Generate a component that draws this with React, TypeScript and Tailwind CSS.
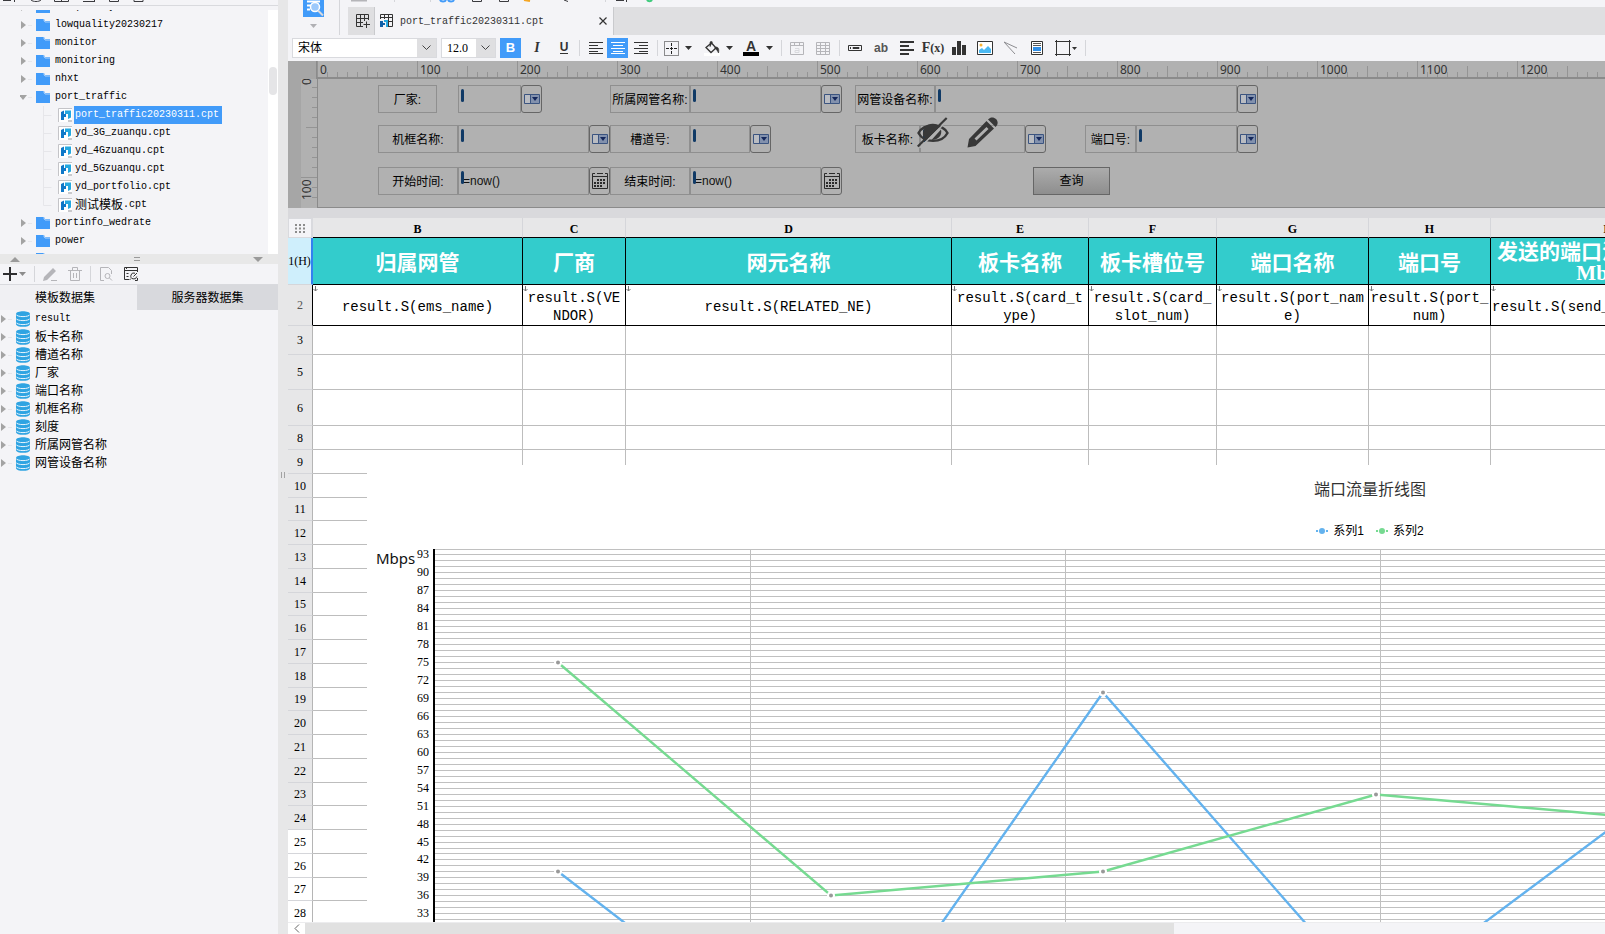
import { useState } from 'react';
import type { ReactNode } from 'react';

const MONO = "font-['Liberation_Mono','Noto_Sans_CJK_SC',monospace]";
const SERIF = "font-['Liberation_Serif','Noto_Sans_CJK_SC',serif]";

const folders = ['lowquality', 'lowquality20230217', 'monitor', 'monitoring', 'nhxt', 'port_traffic'];
const files = [
  'port_traffic20230311.cpt',
  'yd_3G_zuanqu.cpt',
  'yd_4Gzuanqu.cpt',
  'yd_5Gzuanqu.cpt',
  'yd_portfolio.cpt',
  '测试模板.cpt'
];
const moreFolders = ['portinfo_wedrate', 'power', 'report'];
const datasets = ['result', '板卡名称', '槽道名称', '厂家', '端口名称', '机框名称', '刻度', '所属网管名称', '网管设备名称'];

const columns = [
  { letter: 'B', width: 210, title: ['归属网管'], cell: ['result.S(ems_name)'] },
  { letter: 'C', width: 103, title: ['厂商'], cell: ['result.S(VE', 'NDOR)'] },
  { letter: 'D', width: 326, title: ['网元名称'], cell: ['result.S(RELATED_NE)'] },
  { letter: 'E', width: 137, title: ['板卡名称'], cell: ['result.S(card_t', 'ype)'] },
  { letter: 'F', width: 128, title: ['板卡槽位号'], cell: ['result.S(card_', 'slot_num)'] },
  { letter: 'G', width: 152, title: ['端口名称'], cell: ['result.S(port_nam', 'e)'] },
  { letter: 'H', width: 122, title: ['端口号'], cell: ['result.S(port_', 'num)'] },
  { letter: 'I', width: 230, title: ['发送的端口流量（单位:', 'Mbps)'], cell: ['result.S(send_traffic_mbps)'] }
];

const emptyRows = [
  { n: 3, h: 29 },
  { n: 5, h: 35 },
  { n: 6, h: 36 },
  { n: 8, h: 24 },
  { n: 9, h: 24 },
  ...Array.from({ length: 19 }, (_, i) => ({ n: i + 10, h: (i + 10) % 4 === 3 ? 23 : 24 }))
];

/* CJK glyphs are 12px and latin ones 10px, so that two latin characters take one CJK cell */
const TreeText = ({ text, className = '' }: { text: string; className?: string }) => {
  const parts = text.match(/[\x00-\x7f]+|[^\x00-\x7f]+/g) || [];
  return (
    <span className={`flex h-[18px] items-center ${className}`}>
      {parts.map((part) => (
        <span key={part} className={part.charCodeAt(0) > 127 ? 'pt-px text-xs leading-[18px]' : 'text-[10px] leading-[18px]'}>
          {part}
        </span>
      ))}
    </span>
  );
};

const Caret = ({ className = '' }: { className?: string }) => (
  <svg className={`shrink-0 ${className}`} width="7" height="4" viewBox="0 0 7 4">
    <path d="M0 0h7L3.5 4z" fill="currentColor" />
  </svg>
);

const Arrow = ({ open = false }: { open?: boolean }) => (
  <svg width="16" height="18" viewBox="0 0 16 18" className="shrink-0">
    {open ? <path d="M-1 7h8l-4 5z" fill="#a3a3a3" /> : <path d="M1 5l5 4-5 4z" fill="#a3a3a3" />}
    <path d="M8 9.500h4" stroke="#e6e6ea" />
  </svg>
);

const FolderIcon = () => (
  <svg width="14" height="12" viewBox="0 0 14 12" className="shrink-0">
    <path d="M0 0h8l1 2h5v10H0z" fill="#419bf9" />
    <path d="M7.500 .5l1.500 2.500h5" fill="none" stroke="#cfe4fd" strokeWidth=".8" />
  </svg>
);

const CptIcon = () => (
  <svg width="14" height="14" viewBox="0 0 14 14" className="shrink-0">
    <path d="M1 1h13v13H1z" fill="#fff" />
    <path d="M.5 14V.5H14" fill="none" stroke="#c4c4c8" />
    <path d="M10 12h4v2h-4z" fill="#c9c9cc" />
    <path d="M3 4l3-1.500V6h2v3H6v3H3z" fill="#0f78c8" />
    <path d="M7 2.500h6v7L10 11V6H7z" fill="#25a8e0" />
  </svg>
);

const DbIcon = () => (
  <svg width="14" height="16" viewBox="0 0 14 16" className="shrink-0">
    <path d="M0 3C0-.8 14-.8 14 3v10c0 3.800-14 3.800-14 0z" fill="#2fa4e2" />
    <path d="M0 3.500c1 2.800 13 2.800 14 0M0 7.500c1 2.800 13 2.800 14 0M0 11.500c1 2.800 13 2.800 14 0" fill="none" stroke="#e8f4fc" />
  </svg>
);

const ComboIcon = () => (
  <svg width="16" height="10" viewBox="0 0 16 10">
    <path d="M.5 .5h15v9H.5z" fill="#b9bcc2" stroke="#3b5480" />
    <path d="M7 1h8v8H7z" fill="#8291ad" />
    <path d="M6.500 0v10" stroke="#3b5480" />
    <path d="M8 3h6l-3 4z" fill="#14275c" />
  </svg>
);

const CalendarIcon = () => (
  <svg width="16" height="16" viewBox="0 0 16 16">
    <path d="M.5 .5h15v15H.5zM0 3.500h16" fill="none" stroke="#2b2b2b" />
    <path d="M3 1h2M11 1h2" stroke="#b1b1b1" strokeWidth="2" />
    <path d="M5 7h8M2 10h11M2 13h8" stroke="#2b2b2b" strokeWidth="2" strokeDasharray="2 1" />
  </svg>
);

const Separator = ({ className = '' }: { className?: string }) => (
  <span className={`h-4 w-px shrink-0 bg-[#d5d6da] ${className}`} />
);

const IconButton = ({ label, className = '', children }: { label: string; className?: string; children: ReactNode }) => (
  <button aria-label={label} className={`flex h-5 shrink-0 items-center justify-center ${className}`}>
    {children}
  </button>
);

const Sidebar = () => {
  const [tab, setTab] = useState('template');

  return (
    <aside className="flex w-[278px] shrink-0 flex-col bg-[#f4f4f7]">
      <div className="h-[6px] shrink-0 border-b border-[#d9dade]">
        <svg width="160" height="3" viewBox="0 0 160 3" fill="none" stroke="#3a3a3e">
          <path d="M3 .5h8M14.500 0v2M31 0c2 2 8 2 10 0M54.500 0v1.500h14V0M61.500 0v1M83 1.500h12M94.500 0v1.500M109.500 0v1.500h9V0M134 0v1.500h9V0" />
        </svg>
      </div>
      <div className="mt-1 flex h-[244px] shrink-0 overflow-hidden">
        <ul className={`-mt-3 flex-1 text-black ${MONO}`}>
          {folders.map((name) => (
            <li key={name} className="flex h-[18px] items-center pl-5">
              <Arrow open={name === 'port_traffic'} />
              <FolderIcon />
              <TreeText text={name} className="ml-[5px]" />
            </li>
          ))}
          {files.map((name, i) => (
            <li key={name} className="flex h-[18px] items-center pl-[43px]">
              <svg width="15" height="18" viewBox="0 0 15 18" className="shrink-0">
                <path d={i === files.length - 1 ? 'M.5 0v9.500h8' : 'M.5 0v18M.5 9.500h8'} fill="none" stroke="#e6e6ea" />
              </svg>
              <CptIcon />
              <TreeText text={name} className={i === 0 ? 'ml-[2px] bg-[#419bf9] px-px pr-[3px] text-white' : 'ml-[3px]'} />
            </li>
          ))}
          {moreFolders.map((name) => (
            <li key={name} className="flex h-[18px] items-center pl-5">
              <Arrow />
              <FolderIcon />
              <TreeText text={name} className="ml-[5px]" />
            </li>
          ))}
        </ul>
        <div className="w-[10px] bg-white pt-[57px]">
          <div className="mx-auto h-7 w-2 rounded bg-[#e5e5e7]" />
        </div>
      </div>

      <div className="flex h-[10px] shrink-0 items-center justify-between bg-[#e8e8e8] pl-[10px] pr-[15px] text-[#9a9a9a]">
        <svg width="10" height="5" viewBox="0 0 10 5"><path d="M0 5h10L5 0z" fill="currentColor" /></svg>
        <svg width="6" height="4" viewBox="0 0 6 4"><path d="M0 .5h6M0 3.500h6" stroke="currentColor" /></svg>
        <svg width="10" height="5" viewBox="0 0 10 5"><path d="M0 0h10L5 5z" fill="currentColor" /></svg>
      </div>

      <div className="flex h-[21px] shrink-0 items-center border-b border-[#d9dade] pl-[3px]">
        <IconButton label="添加">
          <svg width="14" height="14" viewBox="0 0 14 14"><path d="M7 0v14M0 7h14" stroke="#2e2e30" strokeWidth="2" /></svg>
          <Caret className="ml-[2px] text-[#8c8c8c]" />
        </IconButton>
        <Separator className="mx-2" />
        <IconButton label="编辑">
          <svg width="14" height="14" viewBox="0 0 14 14" fill="#b5b5b9">
            <path d="M1 10L10 1l3 3-9 9-4 1zM8 13h6v1H8z" />
          </svg>
        </IconButton>
        <IconButton label="删除" className="ml-[11px]">
          <svg width="14" height="14" viewBox="0 0 14 14" fill="none" stroke="#b5b5b9">
            <path d="M0 3.500h14M4.500 3V.5h5V3M2.500 4v9.500h9V4M5.500 6v5M8.500 6v5" />
          </svg>
        </IconButton>
        <Separator className="ml-2 mr-[9px]" />
        <IconButton label="预览">
          <svg width="13" height="14" viewBox="0 0 13 14" fill="none" stroke="#b5b5b9">
            <path d="M4 13.500H.5V.5h8l3 3V7" />
            <circle cx="7.500" cy="9" r="2.500" />
            <path d="M9.500 11l2.500 2.500" />
          </svg>
        </IconButton>
        <IconButton label="数据源" className="ml-[11px]">
          <svg width="14" height="14" viewBox="0 0 14 14" fill="none" stroke="#333">
            <path d="M5 12.500H.5V.5h13V5M0 3.500h14M2 1.500h1M2.500 6.500h2M2.500 9.500h2M13.500 11v2.500H11" />
            <path d="M11 6.200a3 3 0 1 0 1.800 3.300M7 11.500L5.500 13" />
            <path d="M9.500 9.500L13 6" />
          </svg>
        </IconButton>
      </div>

      <div className="flex h-[25px] shrink-0 text-xs leading-6" role="tablist">
        <button
          role="tab"
          aria-selected={tab === 'template'}
          onClick={() => setTab('template')}
          className={`w-[137px] pr-[7px] text-center ${tab === 'template' ? 'bg-[#f0f0f3]' : 'bg-[#d8d9dd]'}`}
        >
          模板数据集
        </button>
        <button
          role="tab"
          aria-selected={tab === 'server'}
          onClick={() => setTab('server')}
          className={`flex-1 text-center ${tab === 'server' ? 'bg-[#f0f0f3]' : 'bg-[#d8d9dd]'}`}
        >
          服务器数据集
        </button>
      </div>

      <ul className={`text-black ${MONO}`}>
        {datasets.map((name) => (
          <li key={name} className="flex h-[18px] items-center">
            <Arrow />
            <DbIcon />
            <TreeText text={name} className="ml-[5px]" />
          </li>
        ))}
      </ul>
    </aside>
  );
};

const TopBar = () => (
  <div className="flex h-[35px] shrink-0 bg-[#f4f4f7]">
    <div className="flex w-[52px] shrink-0 flex-col items-center border-r border-[#d5d6da]">
      <svg width="22" height="17" viewBox="0 0 22 17">
        <path d="M0 0h21v17H0z" fill="#419bf9" />
        <path d="M4 1.500h13M4 5.500h4M4 9.500h3" stroke="#fff" strokeWidth="2" />
        <circle cx="12" cy="7" r="4.500" fill="#9cc9fb" stroke="#fff" strokeWidth="1.500" />
        <path d="M15 10.500l5 5" stroke="#d9dade" strokeWidth="2" />
      </svg>
      <Caret className="mt-[7px] text-[#b0b0b4]" />
    </div>
    <div className="flex min-w-0 flex-1 flex-col pl-2">
      <svg width="320" height="7" viewBox="0 0 320 7" fill="none" className="shrink-0">
        <path d="M3 .5h16" stroke="#b5b5b9" strokeWidth="2" />
        <path d="M46.500 0v2M82.500 0v2M257.500 0v2" stroke="#d5d6da" />
        <path d="M92 0c1 2 5 2 6 0M100 0c1 2 5 2 6 0" stroke="#419bf9" strokeWidth="2" />
        <path d="M124.500 0v1.500h9V0M151.500 0v1.500h9V0M268 .5h8M278.500 0v2M216 0l4 1.500" stroke="#3a3a3e" />
        <path d="M176 0l6 1" stroke="#f5a623" strokeWidth="2" />
        <path d="M299 0c1 1.500 4 1.500 5 0" stroke="#3ecb7c" strokeWidth="2" />
      </svg>
      <div className="flex flex-1 bg-[#dfdfe1]">
        <button aria-label="新建" className="flex w-[27px] items-center justify-center border-r border-[#c9cacd] pl-1">
          <svg width="14" height="14" viewBox="0 0 14 14" fill="none" stroke="#333">
            <path d="M7 12.500H.5V.5h12V6M0 4.500h13M0 8.500h7M4.500 0v13M8.500 0v7M7.500 10.500H14M10.500 7.500V14" />
          </svg>
        </button>
        <div className="flex w-[239px] items-center border-r border-[#c9cacd] bg-[#f4f4f7] pl-[5px] pr-[6px]">
          <svg width="14" height="14" viewBox="0 0 14 14" fill="none" stroke="#333">
            <path d="M.5 5V.5h12v12H9M0 3.500h13M4.500 0v5M8.500 0v13M8 7.500h5" />
            <path d="M0 7h3v2h2v2H3v2H0z" fill="#0f5fa8" stroke="none" />
            <path d="M4 6h4v7H6V8H4z" fill="#25a8e0" stroke="none" />
          </svg>
          <span className={`ml-[6px] flex-1 text-[10px] text-[#333] ${MONO}`}>port_traffic20230311.cpt</span>
          <button aria-label="关闭">
            <svg width="8" height="8" viewBox="0 0 8 8"><path d="M.5 .5l7 7M7.500 .5l-7 7" stroke="#333" strokeWidth="1.200" /></svg>
          </button>
        </div>
      </div>
    </div>
  </div>
);

const FormatSelect = ({ label, value, options, className }: { label: string; value: string; options: string[]; className: string }) => (
  <div className={`relative flex h-5 shrink-0 items-center border border-[#d9dade] bg-white ${className}`}>
    <select
      aria-label={label}
      defaultValue={value}
      className={`h-full w-full appearance-none pl-[5px] text-xs leading-4 text-black outline-none ${SERIF}`}
    >
      {options.map((o) => <option key={o}>{o}</option>)}
    </select>
    <span className="pointer-events-none absolute inset-y-0 right-0 flex w-[19px] items-center justify-center bg-[#dfdfe1]">
      <svg width="9" height="6" viewBox="0 0 9 6"><path d="M.5 .5l4 4 4-4" fill="none" stroke="#444" /></svg>
    </span>
  </div>
);

const FormatBar = () => (
  <div className="flex h-[26px] shrink-0 items-center overflow-hidden bg-[#f4f4f7] pl-1 text-[#333]">
    <FormatSelect label="字体" value="宋体" options={['宋体', '黑体']} className="w-[145px]" />
    <FormatSelect label="字号" value="12.0" options={['10.0', '12.0', '14.0']} className="ml-1 w-[55px]" />
    <IconButton label="加粗" className="ml-1 w-[21px] bg-[#419bf9]">
      <span className="text-[13px] font-black text-white">B</span>
    </IconButton>
    <IconButton label="斜体" className="ml-[6px] w-5">
      <span className={`text-sm font-bold italic ${SERIF}`}>I</span>
    </IconButton>
    <IconButton label="下划线" className="ml-[7px] w-5">
      <span className="border-b border-[#333] text-xs font-bold leading-[11px]">U</span>
    </IconButton>
    <Separator className="ml-[5px]" />
    <IconButton label="左对齐" className="ml-2 w-[15px]">
      <svg width="14" height="12" viewBox="0 0 14 12"><path d="M0 .5h14M0 3.500h9M0 6.500h14M0 9.500h9M0 11.500h14" stroke="#333" /></svg>
    </IconButton>
    <IconButton label="居中" className="ml-1 w-[21px] bg-[#419bf9]">
      <svg width="14" height="12" viewBox="0 0 14 12"><path d="M0 .5h14M2 3.500h10M0 6.500h14M2 9.500h10M0 11.500h14" stroke="#fff" /></svg>
    </IconButton>
    <IconButton label="右对齐" className="ml-[5px] w-[15px]">
      <svg width="14" height="12" viewBox="0 0 14 12"><path d="M0 .5h14M5 3.500h9M0 6.500h14M5 9.500h9M0 11.500h14" stroke="#333" /></svg>
    </IconButton>
    <Separator className="ml-[9px]" />
    <IconButton label="边框" className="ml-[6px]">
      <svg width="15" height="15" viewBox="0 0 15 15" fill="none" stroke="#222">
        <path d="M.5 .5h14v14H.5z" strokeDasharray="1 1" />
        <path d="M7.500 2v11M2 7.500h11" strokeDasharray="3 1" />
      </svg>
      <Caret className="ml-[6px]" />
    </IconButton>
    <IconButton label="填充" className="ml-3">
      <svg width="16" height="15" viewBox="0 0 16 15">
        <path d="M0 12h16v3H0z" fill="#fff" />
        <path d="M2 6.500L7.500 2 12 7l-5 4.500z" fill="none" stroke="#333" strokeWidth="1.300" />
        <path d="M6 6V1.500c0-1.500 2.500-1.500 2.500 0M12 6c3 0 3 3 2.500 6-1-2-2-4-4-5z" fill="#333" stroke="#333" strokeWidth=".6" />
      </svg>
      <Caret className="ml-[6px]" />
    </IconButton>
    <IconButton label="字体颜色" className="ml-[10px]">
      <span className="w-4 border-b-4 border-black text-center text-sm font-bold leading-3">A</span>
      <Caret className="ml-[7px]" />
    </IconButton>
    <Separator className="ml-2" />
    <IconButton label="合并单元格" className="ml-2">
      <svg width="14" height="13" viewBox="0 0 14 13" fill="none" stroke="#b5b5b9">
        <path d="M.5 .5h13v12H.5zM0 3.500h14M4.500 0v3M9.500 0v3" />
        <path d="M5 6.500h4v4H5v-2h4" stroke="#d9dade" />
      </svg>
    </IconButton>
    <IconButton label="取消合并" className="ml-3">
      <svg width="14" height="13" viewBox="0 0 14 13" fill="none" stroke="#b5b5b9">
        <path d="M.5 .5h13v12H.5zM0 3.500h14M0 6.500h14M0 9.500h14M4.500 0v13M9.500 0v13" />
      </svg>
    </IconButton>
    <Separator className="ml-[9px]" />
    <IconButton label="文本框" className="ml-2">
      <svg width="14" height="6" viewBox="0 0 14 6" fill="none" stroke="#333"><path d="M.5 .5h13v5H.5zM2.500 2v2M5 2.500h6v1H5z" /></svg>
    </IconButton>
    <IconButton label="文本" className="ml-[10px] w-[18px]">
      <span className="text-xs font-bold text-[#555]">ab</span>
    </IconButton>
    <IconButton label="富文本" className="ml-[10px]">
      <svg width="14" height="14" viewBox="0 0 14 14"><path d="M0 1h14M0 5h9M0 9h14M0 13h9" stroke="#333" strokeWidth="2" /></svg>
    </IconButton>
    <IconButton label="公式" className="ml-[11px] w-4">
      <span className={`text-sm font-bold ${SERIF}`}>F</span>
      <span className={`text-xs font-bold ${SERIF}`}>(x)</span>
    </IconButton>
    <IconButton label="图表" className="ml-[11px]">
      <svg width="14" height="14" viewBox="0 0 14 14" fill="#333"><path d="M0 6h4v8H0zM5 0h4v14H5zM10 4h4v10h-4z" /></svg>
    </IconButton>
    <IconButton label="图片" className="ml-[11px]">
      <svg width="16" height="14" viewBox="0 0 16 14">
        <path d="M.5 .5h15v13H.5z" fill="#fff" stroke="#333" />
        <circle cx="4" cy="4" r="1.500" fill="#f9b233" />
        <path d="M2 12V9l3-2 2 2 4-4 3 3v4z" fill="#4bb9f2" />
      </svg>
    </IconButton>
    <IconButton label="斜线" className="ml-[11px]">
      <svg width="14" height="14" viewBox="0 0 14 14"><path d="M0 1l13 6M0 1l11 12" stroke="#8c8c90" fill="none" /></svg>
    </IconButton>
    <IconButton label="子报表" className="ml-[13px]">
      <svg width="12" height="14" viewBox="0 0 12 14">
        <path d="M.5 .5h11v13H.5z" fill="#fff" stroke="#333" />
        <path d="M2 2.500h8M2 4.500h8M2 11.500h8" stroke="#555" />
        <path d="M2 6h8v4H2z" fill="#2f8fe8" />
      </svg>
    </IconButton>
    <IconButton label="形状" className="ml-3">
      <svg width="16" height="16" viewBox="0 0 16 16"><path d="M1.500 1.500h13v13h-13zM0 1.500h16M0 14.500h16M1.500 0v16M14.500 0v16" fill="none" stroke="#333" /></svg>
      <svg width="5" height="3" viewBox="0 0 5 3" className="ml-px"><path d="M0 0h5L2.500 3z" fill="#333" /></svg>
    </IconButton>
    <Separator className="ml-2" />
  </div>
);

const HRuler = () => {
  const ticks = Array.from({ length: 200 }, (_, i) => i * 10);
  return (
    <svg height="18" className="min-w-0 flex-1 bg-[#b1b1b1]">
      {ticks.map((t) => (
        <path key={t} d={`M${t + 0.5} ${t % 100 === 0 ? 0 : t % 50 === 0 ? 5 : 11}V16`} stroke="#949494" />
      ))}
      {ticks.filter((t) => t % 100 === 0).map((t) => (
        <text key={t} x={t + 3} y="13" fontSize="12" fill="#333" fontFamily="Noto Sans, sans-serif">{t}</text>
      ))}
      <path d="M0 17h2000" stroke="#8b8b8b" strokeWidth="2" />
    </svg>
  );
};

const VRuler = () => {
  const ticks = Array.from({ length: 13 }, (_, i) => i * 10);
  return (
    <svg width="29" height="129" className="shrink-0 bg-[#b1b1b1]">
      <path d="M0 0h13v129H0z" fill="#a6a6a6" />
      {ticks.map((t) => (
        <path key={t} d={`M${t % 100 === 0 ? 13 : t % 50 === 0 ? 18 : 24} ${t - 1.5}H29`} stroke="#949494" />
      ))}
      <text transform="translate(23 6) rotate(-90)" fontSize="12" fill="#333" fontFamily="Noto Sans, sans-serif">0</text>
      <text transform="translate(23 121) rotate(-90)" fontSize="12" fill="#333" fontFamily="Noto Sans, sans-serif">100</text>
    </svg>
  );
};

type WidgetProps = {
  id: string;
  label: string;
  labelWidth: string;
  fieldWidth: string;
  className?: string;
  date?: boolean;
};

const Widget = ({ id, label, labelWidth, fieldWidth, className = '', date = false }: WidgetProps) => (
  <div className={`flex h-7 shrink-0 ${className}`}>
    <label
      htmlFor={id}
      className={`flex items-center justify-center whitespace-nowrap border border-[#8f8f8f] pt-[2px] text-xs text-black ${labelWidth}`}
    >
      {label}:
    </label>
    <div className={`relative border border-[#8f8f8f] ${fieldWidth}`}>
      <span className="absolute left-[2px] top-[3px] h-[13px] w-[3px] rounded-sm bg-[#103a66]" />
      <input
        id={id}
        type="text"
        defaultValue={date ? '=now()' : ''}
        className="h-full w-full bg-transparent pl-1 text-xs text-[#111] outline-none"
      />
    </div>
    <button aria-label={`选择${label}`} className="flex w-[21px] items-center justify-center rounded-[3px] border border-[#666]">
      {date ? <CalendarIcon /> : <ComboIcon />}
    </button>
  </div>
);

const ParameterPane = () => (
  <div className="shrink-0 bg-[#a6a6a6]">
    <div className="flex">
      <div className="w-[29px] shrink-0 border-r border-[#8b8b8b] bg-[#a6a6a6]" />
      <HRuler />
    </div>
    <div className="flex">
      <VRuler />
      <form
        onSubmit={(e) => e.preventDefault()}
        className="relative min-w-0 flex-1 overflow-hidden border-b border-l border-[#8b8b8b] bg-[#b1b1b1] pl-[60px] pt-[6px]"
      >
        <div className="flex">
          <Widget id="vendor" label="厂家" labelWidth="w-[59px] mr-[21px]" fieldWidth="w-[63px]" />
          <Widget id="ems" label="所属网管名称" labelWidth="w-20" fieldWidth="w-[131px]" className="ml-[68px]" />
          <Widget id="device" label="网管设备名称" labelWidth="w-20" fieldWidth="w-[302px]" className="ml-[13px]" />
        </div>
        <div className="mt-3 flex">
          <Widget id="frame" label="机框名称" labelWidth="w-20" fieldWidth="w-[131px]" />
          <Widget id="slot" label="槽道号" labelWidth="w-20" fieldWidth="w-[60px]" />
          <Widget id="card" label="板卡名称" labelWidth="w-[65px]" fieldWidth="w-[105px]" className="ml-[84px]" />
          <Widget id="port" label="端口号" labelWidth="w-[51px]" fieldWidth="w-[101px]" className="ml-[39px]" />
        </div>
        <div className="mt-[14px] flex">
          <Widget id="start" label="开始时间" labelWidth="w-20" fieldWidth="w-[131px]" date />
          <Widget id="end" label="结束时间" labelWidth="w-20" fieldWidth="w-[131px]" date />
          <button className="ml-[191px] w-[77px] border border-[#666] bg-gradient-to-b from-[#acacac] to-[#8e8e8e] text-xs text-black">
            查询
          </button>
        </div>
        {/* hover actions of the pane */}
        <div className="absolute left-[599px] top-[38px] flex gap-[18px] text-[#383838]">
          <button type="button" aria-label="隐藏">
            <svg width="32" height="31" viewBox="0 0 32 31" fill="none" stroke="currentColor">
              <path d="M1.500 16C7 6 25 6 30.500 16 25 26.500 7 26.500 1.500 16z" strokeWidth="2.400" />
              <path d="M6 19C5 10 11 6.500 16 6.800c3 .2 5 1 7 3.200L10 23z" fill="currentColor" stroke="none" />
              <path d="M24 12.500c1.500 6-3 10.500-9.500 10.500z" fill="currentColor" stroke="none" />
              <path d="M2.500 31L31.500 2.500" stroke="#b1b1b1" strokeWidth="1.500" />
              <path d="M.7 29.500L29.700 1" strokeWidth="2.200" />
            </svg>
          </button>
          <button type="button" aria-label="编辑">
            <svg width="31" height="31" viewBox="0 0 31 31" fill="currentColor">
              <path fillRule="evenodd" d="M19.500 4l7.500 7.500L8.500 29 .5 30.500 2 22zM7.500 21.500l2 2L21.500 12l-2-2z" />
              <path d="M21 2.500c2.500-3 6-2.500 8-.5s2.500 5.500-.5 8z" />
            </svg>
          </button>
        </div>
      </form>
    </div>
  </div>
);

const LINES = [
  { name: '系列1', color: '#63b2ee', values: [40, 5, 70, 18, 52] },
  { name: '系列2', color: '#76da91', values: [75, 36, 40, 53, 49] }
];

const yOf = (v: number) => Math.floor((94 - v) * 5.98) + 0.5;
const xOf = (i: number) => 191 + Math.round(i * 272.5);

const TrafficChart = () => {
  const grid = Array.from({ length: 95 }, (_, i) => i);
  return (
    <div className="w-[2006px] bg-white">
      <h2 className="pt-[13px] text-center text-base leading-6 text-[#333]">端口流量折线图</h2>
      <div className="mt-[19px] flex h-5 items-center justify-center gap-3 text-xs text-black">
        {LINES.map((l) => (
          <span key={l.name} className="flex items-center gap-[5px]">
            <svg width="12" height="6" viewBox="0 0 12 6">
              <path d="M0 3h12" stroke={l.color} strokeWidth="2" />
              <circle cx="6" cy="3" r="4" fill="#fff" />
              <circle cx="6" cy="3" r="3" fill={l.color} />
            </svg>
            {l.name}
          </span>
        ))}
      </div>
      <svg width="2006" height="580" className="mt-2 block">
        {grid.map((v) => (
          <path key={v} d={`M68 ${yOf(v)}H2006`} stroke="#c0c0c0" />
        ))}
        {[1, 2, 3, 4, 5].map((i) => (
          <path key={i} d={`M${68.5 + i * 315} 0V580`} stroke="#c0c0c0" />
        ))}
        <path d="M67 0V580" stroke="#000" strokeWidth="2" />
        {grid.filter((v) => v % 3 === 0).map((v) => (
          <text key={v} x="62" y={yOf(v) + 3} textAnchor="end" fontSize="12" fontFamily="Liberation Serif, serif">{v}</text>
        ))}
        <text x="9" y="15" fontSize="15" fontFamily="Noto Sans, sans-serif" fill="#111">Mbps</text>
        {LINES.map((l) => (
          <polyline
            key={l.name}
            fill="none"
            stroke={l.color}
            strokeWidth="2.400"
            points={l.values.map((v, i) => `${xOf(i)},${yOf(v)}`).join(' ')}
          />
        ))}
        {LINES.map((l) =>
          l.values.map((v, i) => (
            <circle key={l.name + i} cx={xOf(i)} cy={yOf(v)} r="3" fill="#999" stroke="#fff" strokeWidth="2" />
          ))
        )}
      </svg>
    </div>
  );
};

const Sheet = () => (
  <div className="relative min-h-0 flex-1 overflow-hidden bg-white">
    <table className="w-[1433px] table-fixed border-separate border-spacing-0">
      <colgroup>
        <col style={{ width: 25 }} />
        {columns.map((c) => <col key={c.letter} style={{ width: c.width }} />)}
      </colgroup>
      <thead>
        <tr className={`h-5 text-xs leading-4 ${SERIF}`}>
          <th aria-label="全选" className="border border-r-2 border-[#d9dade] bg-[#f4f4f7] p-0">
            <svg width="11" height="9" viewBox="0 0 11 9" className="mx-auto block">
              <path d="M0 1h11M0 4.500h11M0 8h11" stroke="#8c8c8c" strokeWidth="2" strokeDasharray="2 2" />
            </svg>
          </th>
          {columns.map((c) => (
            <th key={c.letter} className="border-b border-r border-b-black border-r-[#d5d6da] bg-[#e7e7e8] p-0 pt-[2px] font-semibold text-black">
              {c.letter}
            </th>
          ))}
        </tr>
      </thead>
      <tbody>
        <tr className="h-[47px]">
          <th className={`border-b border-r-2 border-b-[#d5d6da] border-r-[#3380f0] bg-[#cfeffc] p-0 text-xs font-normal text-black ${SERIF}`}>
            1(H)
          </th>
          {columns.map((c) => (
            <th
              key={c.letter}
              className={`whitespace-nowrap border-b border-r border-black bg-[#33cccc] p-0 pt-1 text-[21px] font-bold leading-[21px] text-white ${SERIF}`}
            >
              {c.title.map((line) => <span key={line} className="block">{line}</span>)}
            </th>
          ))}
        </tr>
        <tr className="h-[41px]">
          <th className={`border-b border-r border-b-[#d5d6da] border-r-black bg-[#e7e7e8] p-0 text-xs font-normal text-[#555] ${SERIF}`}>
            2
          </th>
          {columns.map((c) => (
            <td
              key={c.letter}
              className={`relative whitespace-nowrap border-b border-r border-black p-0 pt-1 text-center text-sm leading-[18px] text-black ${MONO}`}
            >
              <svg width="5" height="6" viewBox="0 0 5 6" className="absolute left-0 top-px">
                <path d="M2.500 0v5M.5 3l2 2 2-2" fill="none" stroke="#777" />
              </svg>
              {c.cell.map((line) => <span key={line} className="block">{line}</span>)}
            </td>
          ))}
        </tr>
        {emptyRows.map((r) => (
          <tr key={r.n} style={{ height: r.h }}>
            <th
              className={`border-b border-r border-b-[#d5d6da] border-r-[#b5b5b5] p-0 text-xs font-normal leading-4 text-black ${SERIF} ${
                r.n > 24 ? 'bg-white' : 'bg-[#e7e7e8]'
              }`}
            >
              {r.n}
            </th>
            {columns.map((c) => <td key={c.letter} className="border-b border-r border-[#bdbdbd] p-0" />)}
          </tr>
        ))}
      </tbody>
    </table>
    {/* the chart floats over the cells */}
    <div className="absolute bottom-0 left-[79px] right-0 top-[247px] overflow-hidden bg-white">
      <TrafficChart />
    </div>
  </div>
);

const App = () => (
  <div className="flex h-screen overflow-hidden bg-[#f4f4f7] font-['Liberation_Sans','Noto_Sans_CJK_SC',sans-serif] text-black">
    <Sidebar />
    <div className="flex w-[10px] shrink-0 items-center justify-center bg-[#e7e7e8] pt-4">
      <svg width="4" height="6" viewBox="0 0 4 6"><path d="M.5 0v6M3.500 0v6" stroke="#a3a3a3" /></svg>
    </div>
    <main className="flex min-w-0 flex-1 flex-col">
      <TopBar />
      <FormatBar />
      <ParameterPane />
      <div className="h-[10px] shrink-0 bg-[#d9d9dc]" />
      <Sheet />
      <div className="flex h-3 shrink-0 border-t border-[#ececee] bg-[#f4f4f7]">
        <button aria-label="向左滚动" className="flex w-[17px] shrink-0 items-center justify-center bg-white">
          <svg width="6" height="9" viewBox="0 0 6 9"><path d="M5 .5l-4 4 4 4" fill="none" stroke="#666" /></svg>
        </button>
        <div className="w-[66%] bg-[#e1e1e1]" />
      </div>
    </main>
  </div>
);

export default App;
